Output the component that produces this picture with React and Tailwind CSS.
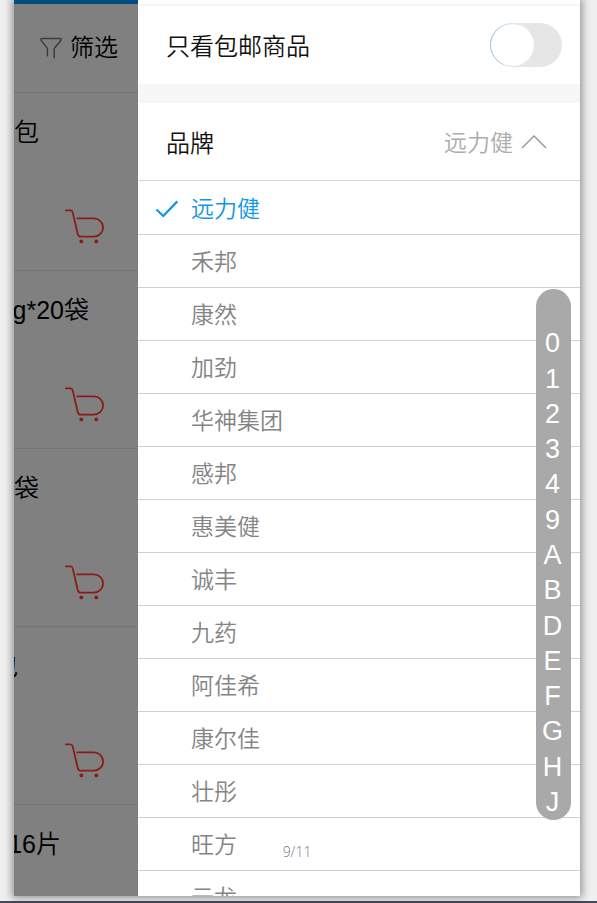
import { useState } from "react";

const products = [
  { name: "包", width: "w-[25px]" },
  { name: "g*20袋", width: "w-[75px]" },
  { name: "袋", width: "w-[25px]" },
  { name: "包", width: "w-[4px]" },
  { name: "16片", width: "w-[47px]" },
];

const brands = [
  "远力健", "禾邦", "康然", "加劲", "华神集团", "感邦", "惠美健",
  "诚丰", "九药", "阿佳希", "康尔佳", "壮彤", "旺方", "云龙",
];

const letters = ["0", "1", "2", "3", "4", "9", "A", "B", "D", "E", "F", "G", "H", "J"];

function FilterIcon() {
  return (
    <svg className="h-[22px] w-[22px]" viewBox="0 0 22 22" fill="none" stroke="#3c3c3c" strokeWidth="1.5" strokeLinejoin="round" strokeLinecap="round" aria-hidden="true">
      <path d="M7.4 18.8V11.4L1.2 3.4Q.2 1.4 2.2 1.4H19.8Q21.8 1.4 20.8 3.4L14.2 11.4V20.8" />
    </svg>
  );
}

function CartIcon() {
  return (
    <svg className="h-[36px] w-[40px]" viewBox="0 0 40 36" fill="none" stroke="#861d18" strokeWidth="1.8" strokeLinecap="round" strokeLinejoin="round" aria-hidden="true">
      <path d="M.9 1.4H5.4Q7.2 1.4 7.7 3.4L12.8 25.2Q13.4 27.6 15.4 27.6H29A9.1 9.1 0 0 0 29 9.4H12.2" />
      <circle cx="16.3" cy="32.4" r="1.9" fill="#861d18" stroke="none" />
      <circle cx="31.3" cy="32.4" r="1.9" fill="#861d18" stroke="none" />
    </svg>
  );
}

function ProductStrip() {
  return (
    <div className="w-[124px] shrink-0 overflow-hidden bg-[#808080] font-[350]">
      <div className="h-1 bg-[#004e80]" />
      <button className="flex h-[89px] w-full items-center gap-2 border-b border-[#717171] pl-[26px] text-2xl text-black">
        <FilterIcon />
        筛选
      </button>
      <ul>
        {products.map((product, i) => (
          <li key={i} className="h-[178px] border-b border-[#757575] pt-[22px]">
            <div className={`flex h-9 items-center justify-end overflow-hidden text-[25px] whitespace-nowrap text-black ${product.width}`}>
              {product.name}
            </div>
            <button className="mt-[58px] ml-[51px] block" aria-label="加入购物车">
              <CartIcon />
            </button>
          </li>
        ))}
      </ul>
    </div>
  );
}

function FilterDrawer() {
  const [freeShipping, setFreeShipping] = useState(false);
  const [brand, setBrand] = useState("远力健");
  return (
    <div className="min-w-0 flex-1 bg-white font-[350]">
      <div className="mt-1 h-0.5 bg-[#f5f5f5]" />
      <label className="flex h-[78px] items-center justify-between pr-[18px] pl-7 text-2xl text-[#111111]">
        <span className="pt-1">只看包邮商品</span>
        <input
          type="checkbox"
          checked={freeShipping}
          onChange={(e) => setFreeShipping(e.target.checked)}
          className="h-11 w-[72px] appearance-none rounded-full bg-[#e6e6e6] p-px before:block before:h-[42px] before:w-[43px] before:rounded-full before:bg-white before:shadow-[-1px_0_0_#8fc9ee] checked:bg-[#1296e8] checked:before:ml-auto"
        />
      </label>
      <div className="h-[19px] bg-[#f7f7f7]" />
      <button className="flex h-[78px] w-full items-center gap-2 border-b border-[#d6d6d6] pr-[33px] pl-7">
        <span className="pt-1 text-2xl text-[#111111]">品牌</span>
        <span className="ml-auto pt-1 text-[23px] text-[#acacac]">{brand}</span>
        <svg className="h-[14px] w-[26px]" viewBox="0 0 26 14" fill="none" stroke="#9c9c9c" strokeWidth="1.5" aria-hidden="true">
          <path d="M1 13L13 1L25 13" />
        </svg>
      </button>
      <ul>
        {brands.map((name) => (
          <li key={name} className="border-b border-[#d0d0d2] first:pt-px">
            <button
              onClick={() => setBrand(name)}
              aria-pressed={brand === name}
              className={`flex h-[52px] w-full items-center pt-0.5 pl-[17px] text-[23px] ${brand === name ? "text-[#1296e8]" : "text-[#848484]"}`}
            >
              <span className="w-9 shrink-0">
                {brand === name && (
                  <svg className="h-[18px] w-6" viewBox="0 0 24 18" fill="none" stroke="#1296e8" strokeWidth="2.3" aria-hidden="true">
                    <path d="M1.4 9.5L8.3 16L22.3 1.4" />
                  </svg>
                )}
              </span>
              {name}
            </button>
          </li>
        ))}
      </ul>
    </div>
  );
}

export default function App() {
  return (
    <div className="flex h-screen flex-col overflow-hidden bg-[#efefef] font-['Liberation_Sans','Noto_Sans_CJK_SC',sans-serif]">
      <main className="relative mr-[17px] ml-[14px] min-h-0 flex-1 shadow-[0_0_8px_2px_rgba(0,0,0,0.4)]">
        <div className="flex h-full overflow-hidden">
          <ProductStrip />
          <FilterDrawer />
        </div>
        <nav aria-label="品牌索引" className="absolute top-[289px] right-[9px] flex h-[531px] w-[35px] flex-col rounded-full bg-[#a9a9a9] pt-0.5 pr-0.5 text-[27px] leading-none text-white">
          <span className="flex-1" />
          {letters.map((letter) => (
            <button key={letter} className="flex flex-1 items-center justify-center">
              {letter}
            </button>
          ))}
        </nav>
        <div className="absolute inset-x-0 bottom-[34px] text-center font-['Open_Sans','Noto_Sans',sans-serif] text-sm font-light text-[#77778c]">
          9/11
        </div>
      </main>
      <div className="h-[5px] shrink-0" />
      <div className="h-0.5 shrink-0 bg-[#444c5a]" />
    </div>
  );
}
